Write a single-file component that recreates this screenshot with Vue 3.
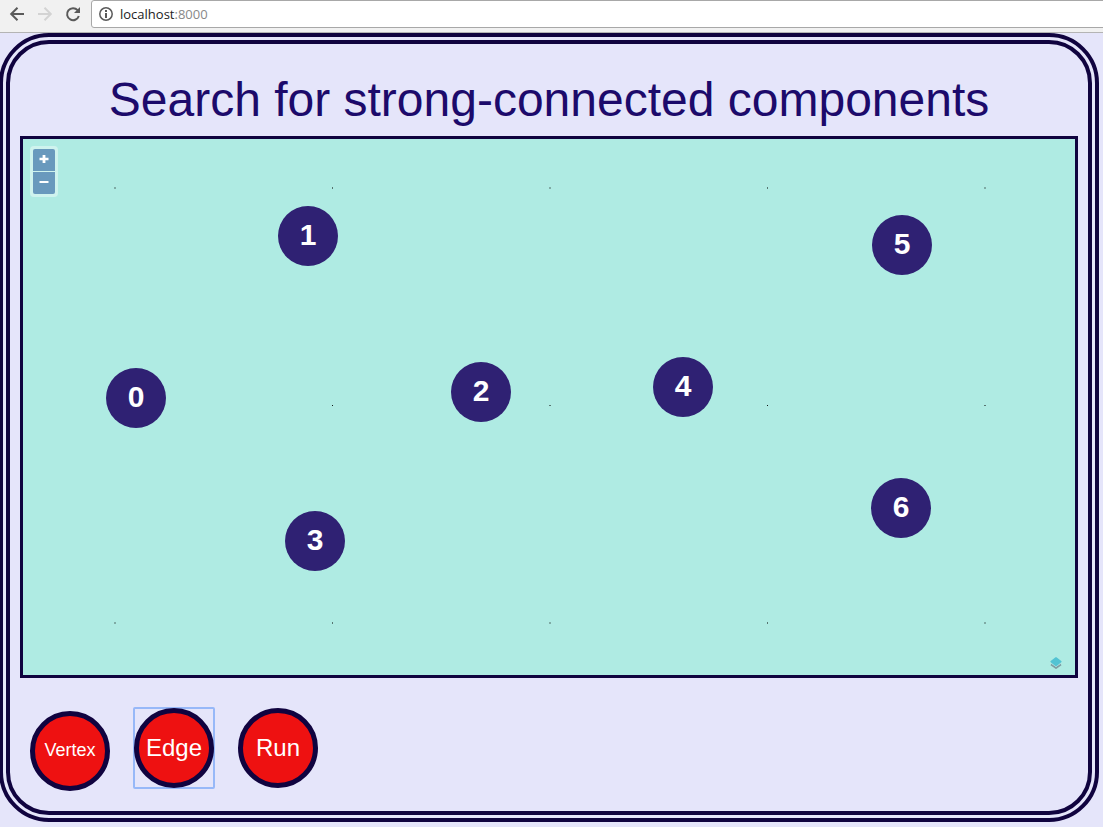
<script setup>
const nodes = [
  { id: 0, x: 83, y: 229 },
  { id: 1, x: 255, y: 67 },
  { id: 2, x: 428, y: 223 },
  { id: 3, x: 262, y: 372 },
  { id: 4, x: 630, y: 218 },
  { id: 5, x: 849, y: 76 },
  { id: 6, x: 848, y: 339 },
]

const columns = [
  { x: 91, w: 2 },
  { x: 309, w: 1 },
  { x: 526, w: 2 },
  { x: 744, w: 1 },
  { x: 961, w: 2 },
]
const rows = [
  { y: 48, h: 2 },
  { y: 266, h: 1 },
  { y: 483, h: 2 },
]
const ticks = rows.flatMap((r) =>
  columns.map((c) => ({
    x: c.x,
    y: r.y,
    w: c.w,
    h: r.h,
    opacity: c.w * r.h === 1 ? 0.9 : c.w * r.h === 2 ? 0.5 : 0.27,
  })),
)
</script>

<template>
  <div class="browser">
    <header class="toolbar">
      <button class="nav" type="button" aria-label="Back">
        <svg width="16" height="16" viewBox="0 0 16 16" fill="none" stroke="#5a5a5a" stroke-width="2">
          <path d="M15 8H3M8.5 1.7L2.2 8L8.5 14.3" />
        </svg>
      </button>
      <button class="nav" type="button" aria-label="Forward" disabled>
        <svg width="16" height="16" viewBox="0 0 16 16" fill="none" stroke="#d3d3d3" stroke-width="2">
          <path d="M1 8H13M7.5 1.7L13.8 8L7.5 14.3" />
        </svg>
      </button>
      <button class="nav" type="button" aria-label="Reload">
        <svg width="16" height="16" viewBox="0 0 16 16">
          <path d="M12.6 4.2A6 6 0 1 0 13.8 10" fill="none" stroke="#5a5a5a" stroke-width="2" />
          <path d="M15 1V7H9Z" fill="#5a5a5a" />
        </svg>
      </button>
      <div class="address">
        <svg width="14" height="14" viewBox="0 0 14 14">
          <circle cx="7" cy="7" r="6.2" fill="none" stroke="#5a5a5a" stroke-width="1.5" />
          <path d="M6 6H8V11H6ZM6 3H8V5H6Z" fill="#5a5a5a" />
        </svg>
        <span class="url">localhost<span class="port">:8000</span></span>
      </div>
    </header>

    <main class="panel">
      <h1>Search for strong-connected components</h1>

      <section class="map" aria-label="Graph">
        <svg class="ticks" aria-hidden="true">
          <rect
            v-for="(t, i) in ticks"
            :key="i"
            :x="t.x"
            :y="t.y"
            :width="t.w"
            :height="t.h"
            :opacity="t.opacity"
          />
        </svg>
        <div
          v-for="n in nodes"
          :key="n.id"
          class="node"
          :style="{ left: n.x + 'px', top: n.y + 'px' }"
        >{{ n.id }}</div>

        <div class="zoom">
          <button type="button" aria-label="Zoom in">
            <svg width="10" height="10" viewBox="0 0 10 10"><path d="M3.6 1H6.4V3.8H9.5V6.2H6.4V9H3.6V6.2H0.5V3.8H3.6Z" fill="#fff" /></svg>
          </button>
          <button type="button" aria-label="Zoom out">
            <svg width="10" height="10" viewBox="0 0 10 10"><path d="M0.5 4H9.5V6H0.5Z" fill="#fff" /></svg>
          </button>
        </div>

        <svg class="badge" width="12" height="12" viewBox="0 0 12 12" aria-hidden="true">
          <path d="M1 7.5L6 11L11 7.5" fill="none" stroke="#7e9da2" stroke-width="1.8" stroke-linejoin="round" />
          <path d="M1 6L6 9.5L11 6" fill="none" stroke="#a9dfe0" stroke-width="1" />
          <path d="M6 1L10.8 4.6L6 8.4L1.2 4.6Z" fill="#52c3d3" stroke="#52c3d3" stroke-width="1.6" stroke-linejoin="round" />
        </svg>
      </section>

      <div class="actions">
        <button class="round small" type="button">Vertex</button>
        <button class="round active" type="button">Edge</button>
        <button class="round" type="button">Run</button>
      </div>
    </main>
  </div>
</template>

<style>
body {
  background: #e5e5fa;
}
</style>

<style scoped>
.browser {
  overflow: hidden;
  font-family: "Liberation Sans", Arial, sans-serif;
}

button {
  margin: 0;
  padding: 0;
  border: 0;
  font-family: inherit;
}

.toolbar {
  display: flex;
  align-items: flex-start;
  gap: 12px;
  height: 32px;
  padding-left: 9px;
  background: #f1f1f1;
  border-bottom: 1px solid #b4b4b4;
}

.nav {
  display: flex;
  margin-top: 6px;
  background: none;
}

.address {
  display: flex;
  flex: 1;
  align-items: center;
  gap: 7px;
  height: 26px;
  margin-left: -2px;
  margin-right: -4px;
  padding-left: 7px;
  background: #fff;
  border: 1px solid #a8a8a8;
  border-radius: 3px;
}

.url {
  font-family: "Open Sans", "Noto Sans", sans-serif;
  font-size: 13px;
  line-height: 26px;
  color: #222;
}

.port {
  color: #888;
}

.panel {
  margin: 0 4px 5px -1px;
  padding: 28px 10px 20px;
  background: #e5e5fa;
  border: 11px double #10033f;
  border-radius: 50px;
}

h1 {
  margin: 0;
  font-size: 48px;
  line-height: 56px;
  font-weight: 400;
  text-align: center;
  white-space: nowrap;
  color: #1c0a6b;
}

.map {
  position: relative;
  height: 536px;
  margin-top: 8px;
  overflow: hidden;
  background: #afebe3;
  border: 3px solid #10033f;
}

.ticks {
  display: block;
  width: 100%;
  height: 100%;
}

.node {
  position: absolute;
  width: 60px;
  height: 60px;
  border-radius: 50%;
  background: #2f2173;
  color: #fff;
  font-size: 30px;
  font-weight: 700;
  line-height: 58px;
  text-align: center;
}

.zoom {
  position: absolute;
  top: 7px;
  left: 7px;
  display: grid;
  gap: 1px;
  padding: 3px;
  border-radius: 4px;
  background: #cff3ee;
}

.zoom button {
  display: flex;
  align-items: center;
  justify-content: center;
  width: 22px;
  height: 22px;
  padding-bottom: 2px;
  background: #6999bd;
  border-radius: 2px 2px 0 0;
}

.zoom button + button {
  border-radius: 0 0 2px 2px;
}

.badge {
  position: absolute;
  right: 13px;
  bottom: 6px;
}

.actions {
  display: flex;
  align-items: baseline;
  gap: 24px;
  padding: 30px 10px 0;
  isolation: isolate;
}

.round {
  width: 80px;
  height: 80px;
  border: 5px solid #10033f;
  border-radius: 50%;
  background: #ee1111;
  color: #fff;
  font-size: 24px;
  white-space: nowrap;
}

.small {
  font-size: 18px;
}

.active {
  position: relative;
  outline: none;
}

.active::before {
  content: "";
  position: absolute;
  inset: -6px;
  border: 2px solid #97b8f8;
  border-radius: 2px;
  z-index: -1;
}
</style>
